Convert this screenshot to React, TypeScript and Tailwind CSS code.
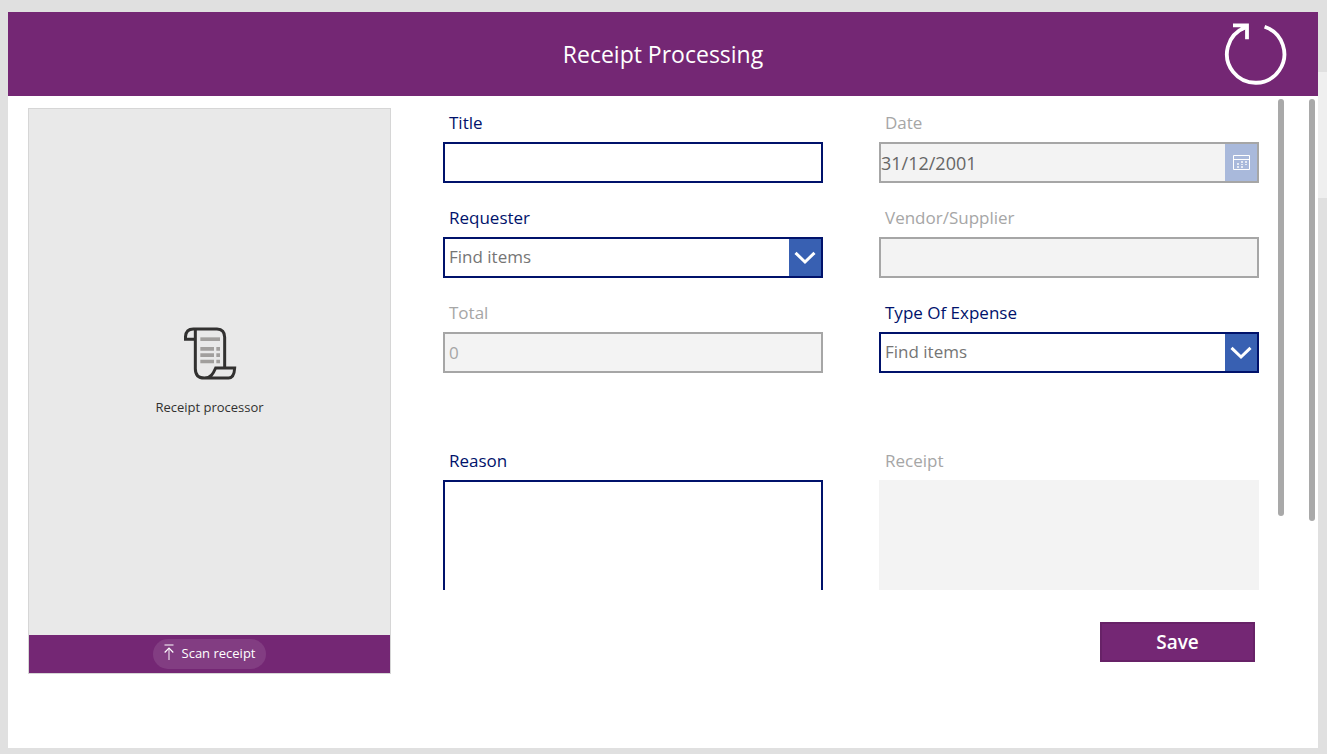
import type { ReactNode } from "react";

function ReloadIcon() {
  return (
    <svg width="64" height="64" viewBox="0 0 64 64" fill="none" stroke="currentColor" aria-hidden="true">
      <path d="M40.6 4.8A28.7 28.7 0 1 1 21 5.4" strokeWidth="3.8" />
      <path d="M9 3.4H23V17.2" strokeWidth="3.8" />
      <path d="M17 7.4L23 4" strokeWidth="3.6" />
    </svg>
  );
}

function ReceiptIcon() {
  return (
    <svg width="54" height="55" viewBox="66 48 162 165" fill="none" aria-hidden="true">
      <g stroke="#323130" strokeWidth="9">
        <path d="M103 88H73.5V80Q75 57 97 57H168Q191 58 191 82V172" />
        <path d="M103 57V176C103 194 113 204 130 204H203C216 204 220 193 221 174H164C157 190 150 204 130 204" />
      </g>
      <g fill="#a19f9d">
        <path d="M118 82h59v11h-59z" />
        <path d="M118 111h41v11h-41zM166 111h11v11h-11z" />
        <path d="M118 130h41v11h-41zM166 130h11v11h-11z" />
        <path d="M118 149h41v11h-41zM166 149h11v11h-11z" />
      </g>
    </svg>
  );
}

function UploadIcon() {
  return (
    <svg width="10" height="20" viewBox="0 0 10 20" fill="none" stroke="currentColor" aria-hidden="true">
      <path d="M0.5 1H9.5" strokeWidth="2" opacity="0.5" />
      <path d="M5 16V4.5" strokeWidth="1.2" opacity="0.8" />
      <path d="M0.7 8.5L5 4.2L9.3 8.5" strokeWidth="1.2" />
    </svg>
  );
}

function CalendarIcon() {
  return (
    <svg width="17" height="15" viewBox="0 0 17 15" fill="none" aria-hidden="true">
      <path d="M0.5 0.5H16.5V14.5H0.5ZM0.5 4.5H16.5" stroke="#fff" />
      <path d="M8 6h2v2H8zM12 6h2v2h-2zM4 8h2v2H4zM8 9h2v1H8zM12 9h2v1h-2zM4 11h2v2H4zM8 11h2v2H8z" fill="#fff" opacity="0.7" />
    </svg>
  );
}

function ChevronIcon() {
  return (
    <svg width="22" height="14" viewBox="0 0 22 14" fill="none" stroke="#fff" strokeWidth="3" aria-hidden="true">
      <path d="M1.5 1.8L11 11L20.5 1.8" />
    </svg>
  );
}

type FieldProps = { id: string; label: string; muted?: boolean; children: ReactNode };

function Field({ id, label, muted, children }: FieldProps) {
  return (
    <div className="flex flex-col gap-[7px]">
      <label htmlFor={id} className={`pl-1.5 text-[17px] leading-6 ${muted ? "text-[#a6a6a6]" : "text-[#00126b]"}`}>
        {label}
      </label>
      {children}
    </div>
  );
}

const disabledBox = "h-[41px] w-full border-2 border-[#a6a6a6] bg-[#f3f3f3] text-[17px] text-[#a6a6a6]";

function Picker({ id }: { id: string }) {
  return (
    <div className="grid h-[41px] grid-cols-[1fr_32px] border-2 border-[#00126b]">
      <select
        id={id}
        defaultValue=""
        className="col-span-2 col-start-1 row-start-1 w-full appearance-none bg-white pb-0.5 pl-1 text-[17px] text-[#757575] outline-none"
      >
        <option value="">Find items</option>
      </select>
      <span className="pointer-events-none col-start-2 row-start-1 flex items-center justify-center bg-[#3860b2]">
        <ChevronIcon />
      </span>
    </div>
  );
}

function ScanPanel() {
  return (
    <section className="mt-3 flex w-[363px] shrink-0 flex-col border border-[#d6d6d6] bg-[#e9e9e9]">
      <div className="flex flex-1 flex-col items-center justify-center gap-4 pb-0.5">
        <ReceiptIcon />
        <p className="text-[13px] leading-5 text-[#323130]">Receipt processor</p>
      </div>
      <div className="flex h-[38px] items-center justify-center bg-[#742774]">
        <button type="button" className="flex h-[30px] items-center gap-2 rounded-full bg-[#823d82] px-[11px] text-[13px] text-white">
          <UploadIcon />
          Scan receipt
        </button>
      </div>
    </section>
  );
}

export default function App() {
  return (
    <div className="flex h-screen min-h-[640px] bg-[#e0e0e0] pt-3 font-['Open_Sans','Noto_Sans',sans-serif]">
      <main className="mb-1.5 ml-2 flex min-w-0 flex-1 flex-col bg-white">
        <header className="grid h-[84px] shrink-0 grid-cols-[1fr_auto_1fr] items-center bg-[#742774] text-white">
          <h1 className="col-start-2 text-[23px] leading-8">Receipt Processing</h1>
          <button type="button" aria-label="Reload" className="mr-[30px] justify-self-end">
            <ReloadIcon />
          </button>
        </header>

        <div className="flex min-h-0 flex-1 pl-5 pr-[3px]">
          <div className="mb-[74px] flex min-w-0 flex-1 gap-[52px]">
            <ScanPanel />
            <form className="flex min-w-0 flex-1 flex-col">
              <div className="flex min-h-0 flex-1 gap-[19px] overflow-hidden">
                <div className="grid min-w-0 flex-1 auto-rows-min grid-cols-2 gap-x-14 gap-y-[23px] pt-[15px]">
                  <Field id="title" label="Title">
                    <input id="title" type="text" className="h-[41px] w-full border-2 border-[#00126b] bg-white px-1 text-[17px] outline-none" />
                  </Field>
                  <Field id="date" label="Date" muted>
                    <div className="flex h-[41px] border-2 border-[#a6a6a6] bg-[#f3f3f3]">
                      <input id="date" type="text" disabled defaultValue="31/12/2001" className="min-w-0 flex-1 text-lg text-[#666666]" />
                      <button type="button" disabled aria-label="Open calendar" className="flex w-8 items-center justify-center bg-[#a9b9db]">
                        <CalendarIcon />
                      </button>
                    </div>
                  </Field>
                  <Field id="requester" label="Requester">
                    <Picker id="requester" />
                  </Field>
                  <Field id="vendor" label="Vendor/Supplier" muted>
                    <input id="vendor" type="text" disabled className={disabledBox} />
                  </Field>
                  <Field id="total" label="Total" muted>
                    <input id="total" type="text" disabled defaultValue="0" className={`${disabledBox} pl-1`} />
                  </Field>
                  <Field id="expense" label="Type Of Expense">
                    <Picker id="expense" />
                  </Field>
                  <div className="col-span-2 grid grid-cols-2 gap-x-14 pt-[53px]">
                    <Field id="reason" label="Reason">
                      <textarea id="reason" className="h-[190px] w-full resize-none border-2 border-[#00126b] bg-white px-1 text-[17px] outline-none" />
                    </Field>
                    <Field id="receipt" label="Receipt" muted>
                      <output id="receipt" className="block h-[190px] bg-[#f3f3f3]" />
                    </Field>
                  </div>
                </div>
                <div className="w-1.5 pt-[3px]">
                  <div className="h-[85%] rounded-full bg-[#a9a9a9]" />
                </div>
              </div>
              <div className="flex justify-end pb-3 pr-[29px] pt-8">
                <button type="submit" className="h-10 w-[155px] border-2 border-[#672267] bg-[#742774] text-[19px] leading-6 font-semibold text-white">
                  Save
                </button>
              </div>
            </form>
          </div>
          <div className="ml-[25px] w-1.5 pt-[3px]">
            <div className="h-[65%] rounded-full bg-[#a9a9a9]" />
          </div>
        </div>
      </main>
      <aside aria-hidden="true" className="w-[9px] shrink-0 pt-[60px]">
        <div className="h-[126px] bg-[#efefef]" />
      </aside>
    </div>
  );
}
